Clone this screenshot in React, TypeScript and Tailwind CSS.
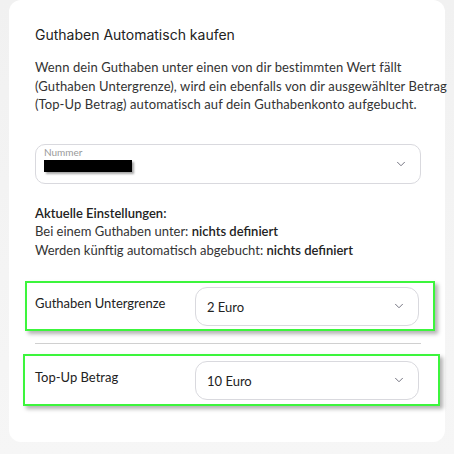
import { ChevronDown } from 'lucide-react'

const body = { fontFamily: 'Lato, "Noto Sans", sans-serif' }
const title = { fontFamily: 'Inter, "Noto Sans", sans-serif' }

function ValueSelect({ value }: { value: string }) {
  return (
    <div className="flex h-[39px] w-[224px] items-center justify-between rounded-[12px] border border-[#d9d9de] bg-white pl-[11px] pr-[12px]">
      <span className="pt-[3px] text-[13px] text-[#222]">{value}</span>
      <ChevronDown className="h-[14px] w-[14px] text-[#6b6b78]" strokeWidth={1.6} />
    </div>
  )
}

export default function App() {
  return (
    <div className="min-h-[454px] w-[454px] bg-gradient-to-b from-[#f1f1f1] to-[#f6f6f6] px-[9px] pb-[12px]" style={body}>
      <div className="flex h-[442px] flex-col rounded-[12px] bg-white px-[26px] pt-[25px]">
        {/* Header */}
        <h2 className="text-[14px] leading-[20px] text-[#222]" style={title}>
          Guthaben Automatisch kaufen
        </h2>
        <p className="mt-[13px] whitespace-nowrap text-[13px] leading-[18.5px] tracking-[0.1px] text-[#333]">
          Wenn dein Guthaben unter einen von dir bestimmten Wert fällt
          <br />
          (Guthaben Untergrenze), wird ein ebenfalls von dir ausgewählter Betrag
          <br />
          (Top-Up Betrag) automatisch auf dein Guthabenkonto aufgebucht.
        </p>

        {/* Nummer select */}
        <div className="mt-[30px] flex h-[40px] w-[386px] items-center justify-between rounded-[10px] border border-[#d9d9de] pl-[8px] pr-[12px]">
          <div className="flex flex-col self-stretch pt-[1px]">
            <span className="text-[10px] leading-[12px] text-[#9a9a9a]">Nummer</span>
            <div className="mt-[2px] h-[12px] w-[88px] bg-black shadow-[2px_2px_2px_rgba(0,0,0,0.35)]" />
          </div>
          <ChevronDown className="h-[14px] w-[14px] text-[#6b6b78]" strokeWidth={1.6} />
        </div>

        {/* Current settings */}
        <div className="mt-[20px] text-[13px] leading-[18.5px] text-[#222]">
          <div className="font-semibold">Aktuelle Einstellungen:</div>
          <div className="text-[#333]">
            Bei einem Guthaben unter: <span className="font-semibold text-[#222]">nichts definiert</span>
          </div>
          <div className="text-[#333]">
            Werden künftig automatisch abgebucht: <span className="font-semibold text-[#222]">nichts definiert</span>
          </div>
        </div>

        {/* Untergrenze */}
        <div className="ml-[-10px] mr-[-16px] mt-[22px] flex h-[50px] items-center border-2 border-[#3cf53c] pl-[8px] shadow-[3px_3px_4px_rgba(0,0,0,0.3)]">
          <span className="w-[160px] pb-[4px] text-[13px] text-[#222]">Guthaben Untergrenze</span>
          <ValueSelect value="2 Euro" />
        </div>

        <div className="mt-[12px] h-px w-[386px] bg-[#d0d0d0]" />

        {/* Top-Up */}
        <div className="ml-[-12px] mr-[-21px] mt-[10px] flex h-[52px] items-center border-2 border-[#3cf53c] pl-[10px] shadow-[3px_3px_4px_rgba(0,0,0,0.3)]">
          <span className="w-[160px] pb-[4px] text-[13px] text-[#222]">Top-Up Betrag</span>
          <ValueSelect value="10 Euro" />
        </div>
      </div>
    </div>
  )
}
